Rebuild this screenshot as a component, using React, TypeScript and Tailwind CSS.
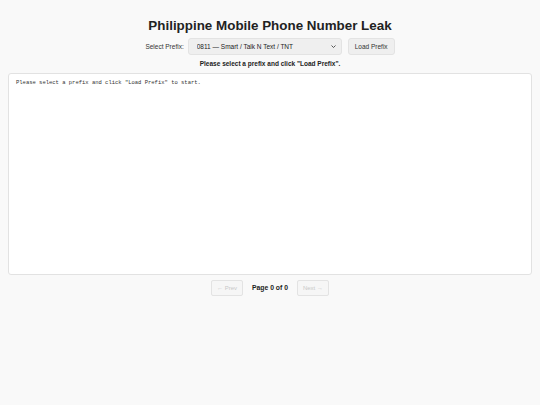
import React from 'react';

const font = { fontFamily: '"Liberation Sans", Arial, sans-serif' };

const App: React.FC = () => {
  return (
    <div className="min-h-[405px] w-[540px] bg-[#f9f9f9] text-[#222]" style={font}>
      <div className="flex flex-col items-center px-[8px] pt-[18px]">
        <h1 className="text-[13.4px] leading-[16px] font-bold text-[#222]">Philippine Mobile Phone Number Leak</h1>

        <div className="mt-[4px] flex items-center gap-[4px]">
          <label className="text-[6.5px] text-[#333]">Select Prefix:</label>
          <div className="relative flex h-[17px] w-[154px] items-center">
            <select
              className="h-[17px] w-full appearance-none rounded-[3px] border border-[#e3e3e3] bg-[#efefef] pl-[8px] text-[6.5px] text-[#222] outline-none"
              style={font}
              defaultValue="0811"
            >
              <option value="0811">0811 — Smart / Talk N Text / TNT</option>
            </select>
            <svg
              className="pointer-events-none absolute right-[6px] top-[7px]"
              width="5"
              height="3"
              viewBox="0 0 10 6"
              fill="none"
              stroke="#444"
              strokeWidth="1.8"
            >
              <path d="M1 1l4 4 4-4" />
            </svg>
          </div>
          <button className="ml-[2px] h-[17px] rounded-[3px] border border-[#e3e3e3] bg-[#efefef] px-[6px] text-[6.5px] text-[#333]">
            Load Prefix
          </button>
        </div>

        <p className="mt-[4px] text-[6.5px] leading-[10px] font-bold text-[#222]">
          Please select a prefix and click "Load Prefix".
        </p>

        <div className="mt-[4px] h-[202px] w-full rounded-[3px] border border-[#e2e2e2] bg-white px-[7px] py-[5px]">
          <pre className="text-[5.5px] leading-[8px] text-[#333]" style={{ fontFamily: '"Liberation Mono", "DejaVu Sans Mono", monospace' }}>
            Please select a prefix and click "Load Prefix" to start.
          </pre>
        </div>

        <div className="mt-[5px] flex items-center gap-[9px]">
          <button disabled className="h-[16px] w-[32px] rounded-[2px] border border-[#e3e3e3] bg-[#f6f6f6] text-[6px] text-[#c8c8c8]">
            ← Prev
          </button>
          <span className="text-[6.8px] font-bold text-[#222]">Page 0 of 0</span>
          <button disabled className="h-[16px] w-[32px] rounded-[2px] border border-[#e3e3e3] bg-[#f6f6f6] text-[6px] text-[#c8c8c8]">
            Next →
          </button>
        </div>
      </div>
    </div>
  );
};

export default App;
